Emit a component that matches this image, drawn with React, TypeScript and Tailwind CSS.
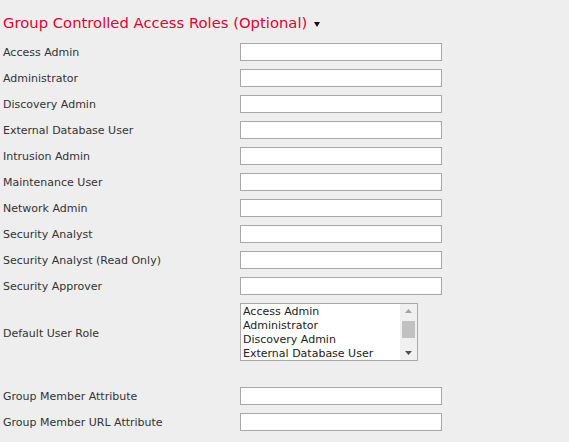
const ROLES = [
  "Access Admin",
  "Administrator",
  "Discovery Admin",
  "External Database User",
  "Intrusion Admin",
  "Maintenance User",
  "Network Admin",
  "Security Analyst",
  "Security Analyst (Read Only)",
  "Security Approver",
];

const LIST_OPTIONS = ["Access Admin", "Administrator", "Discovery Admin", "External Database User"];

function TextRow({ label }: { label: string }) {
  return (
    <div className="flex h-[26px] items-start">
      <label className="w-[240px] shrink-0 pl-[3px] pt-[2px] leading-[16px]">{label}</label>
      <div className="h-[18px] w-[202px] border border-[#a9a9a9] bg-white" />
    </div>
  );
}

function ListBox() {
  return (
    <div className="flex h-[58px] w-[178px] border border-[#a9a9a9] bg-white">
      <div className="flex-1 overflow-hidden pl-[2px] pt-[1px] leading-[14px] text-[#222]">
        {LIST_OPTIONS.map((o) => (
          <div key={o} className="whitespace-nowrap">
            {o}
          </div>
        ))}
      </div>
      <div className="flex w-[17px] flex-col items-center bg-[#f0f0f0]">
        <div className="flex h-[14px] items-center justify-center">
          <svg width="7" height="4" viewBox="0 0 7 4">
            <polygon points="3.5,0 7,4 0,4" fill="#a3a3a3" />
          </svg>
        </div>
        <div className="mt-[3px] h-[17px] w-[13px] bg-[#c1c1c1]" />
        <div className="flex-1" />
        <div className="flex h-[14px] items-center justify-center">
          <svg width="7" height="4" viewBox="0 0 7 4">
            <polygon points="0,0 7,0 3.5,4" fill="#505050" />
          </svg>
        </div>
      </div>
    </div>
  );
}

export default function App() {
  return (
    <div
      className="h-[442px] w-[569px] overflow-hidden bg-[#eeeeee] text-[11px] text-[#333]"
      style={{ fontFamily: '"DejaVu Sans", Verdana, sans-serif' }}
    >
      <div className="flex h-[43px] items-start pl-[3px] pt-[13px]">
        <h2 className="text-[14.8px] leading-[20px] text-[#e5002f]">Group Controlled Access Roles (Optional)</h2>
        <svg className="ml-[7px] mt-[9px]" width="6" height="5" viewBox="0 0 6 5">
          <polygon points="0,0 6,0 3,5" fill="#111" />
        </svg>
      </div>
      {ROLES.map((r) => (
        <TextRow key={r} label={r} />
      ))}
      <div className="flex h-[84px] items-start">
        <label className="w-[240px] shrink-0 self-start pl-[3px] pt-[23px] leading-[16px]">Default User Role</label>
        <ListBox />
      </div>
      <TextRow label="Group Member Attribute" />
      <TextRow label="Group Member URL Attribute" />
    </div>
  );
}
